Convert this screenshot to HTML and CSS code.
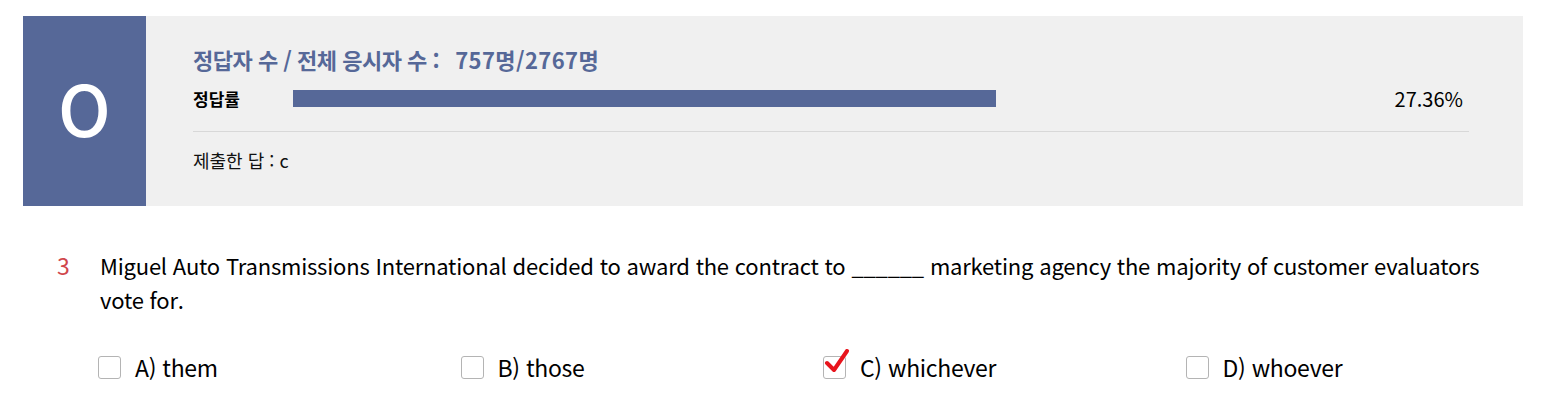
FILE: index.html
```html
<!DOCTYPE html>
<html lang="ko">
<head>
<meta charset="utf-8">
<title>결과</title>
<link rel="stylesheet" href="styles.css">
</head>
<body>
<div class="page">
  <div class="result">
    <div class="mark">O</div>
    <div class="stats">
      <div class="count">정답자 수 / 전체 응시자 수 :<span class="num">757명/2767명</span></div>
      <div class="rate-row">
        <span class="rate-label">정답률</span>
        <div class="bar"><div class="fill" style="width:703px"></div></div>
        <span class="pct">27.36%</span>
      </div>
      <div class="divider"></div>
      <div class="submitted">제출한 답 : c</div>
    </div>
  </div>

  <div class="question">
    <div class="qnum">3</div>
    <div class="qtext">Miguel Auto Transmissions International decided to award the contract to ______ marketing agency the majority of customer evaluators vote for.</div>
  </div>

  <div class="options">
    <label class="option"><span class="box"></span><span class="otext">A) them</span></label>
    <label class="option"><span class="box"></span><span class="otext">B) those</span></label>
    <label class="option"><span class="box checked"><svg class="check" viewBox="0 0 26 26" width="26" height="26"><path d="M3 14 L10 21 L23 2" fill="none" stroke="#e8141c" stroke-width="4" stroke-linecap="round" stroke-linejoin="round"/></svg></span><span class="otext">C) whichever</span></label>
    <label class="option"><span class="box"></span><span class="otext">D) whoever</span></label>
  </div>
</div>
</body>
</html>
```

FILE: styles.css
```css
* { box-sizing: border-box; }
html, body { margin: 0; padding: 0; background: #ffffff; }
body {
  font-family: "Noto Sans CJK KR", "Noto Sans", sans-serif;
  color: #111;
}
.page { padding: 16px 23px 0 23px; }

.result {
  display: flex;
  height: 190px;
  background: #f0f0f0;
}
.mark {
  width: 123px;
  flex: none;
  background: #566898;
  color: #ffffff;
  display: flex;
  align-items: center;
  justify-content: center;
  font-family: "Noto Sans CJK KR", sans-serif;
  font-weight: 500;
  font-size: 70px;
  line-height: 1;
  padding-bottom: 8px;
}
.stats {
  flex: 1;
  padding: 27px 54px 0 47px;
}
.count {
  color: #566898;
  font-size: 22px;
  font-weight: 700;
  line-height: 32px;
  letter-spacing: -0.5px;
}
.count .num { margin-left: 16px; letter-spacing: 0.4px; }
.rate-row {
  display: flex;
  align-items: center;
  height: 30px;
  margin-top: 8px;
}
.rate-label {
  width: 100px;
  font-size: 17px;
  font-weight: 700;
  color: #000;
}
.bar { flex: 1; height: 17px; }
.fill { height: 100%; background: #566898; }
.pct {
  font-size: 20px;
  color: #000;
  padding-right: 6px;
}
.divider {
  height: 1px;
  background: #d8d8d8;
  margin-top: 18px;
}
.submitted {
  font-size: 18px;
  color: #111;
  margin-top: 16px;
  line-height: 24px;
}

.question {
  display: flex;
  margin-top: 42px;
  padding-left: 34px;
  padding-right: 40px;
}
.qnum {
  width: 43px;
  flex: none;
  color: #d0464a;
  font-size: 23px;
  line-height: 34px;
}
.qtext {
  font-size: 22px;
  line-height: 34px;
  color: #000;
  letter-spacing: -0.2px;
}
.options {
  display: grid;
  grid-template-columns: repeat(4, 362.5px);
  margin-top: 34px;
  padding-left: 75px;
}
.option {
  display: flex;
  align-items: center;
  gap: 14px;
  font-size: 23px;
  color: #000;
}
.box {
  position: relative;
  width: 23px;
  height: 23px;
  border: 1px solid #b4b4b4;
  border-radius: 3px;
  background: #fff;
  flex: none;
}
.check {
  position: absolute;
  left: 0;
  top: -8px;
}
.otext { letter-spacing: -0.3px; }
```
